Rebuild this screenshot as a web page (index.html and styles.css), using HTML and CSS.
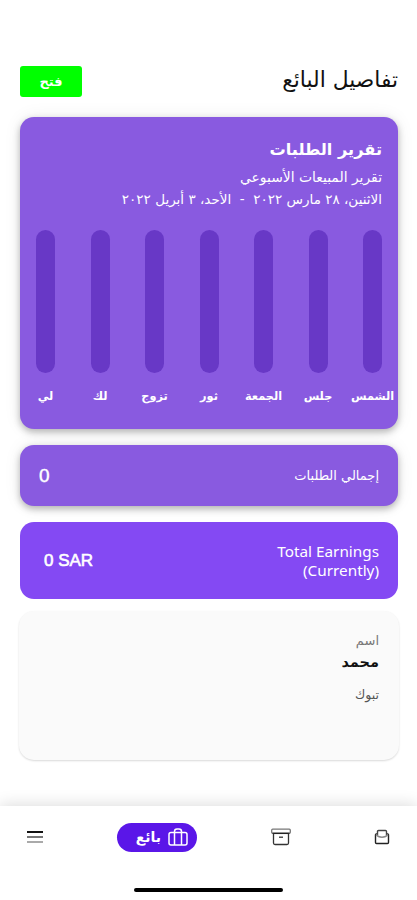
FILE: index.html
```
<!DOCTYPE html>
<html lang="ar" dir="rtl">
<head>
    <meta charset="UTF-8">
    <meta name="viewport" content="width=device-width, initial-scale=1.0">
    <title>تفاصيل البائع</title>
    <link rel="stylesheet" href="styles.css">
</head>
<body>
    <header class="header">
        <h1>تفاصيل البائع</h1>
        <button class="open-btn">فتح</button>
    </header>

    <main class="content">
        <section class="card report">
            <h2>تقرير الطلبات</h2>
            <p class="subtitle">تقرير المبيعات الأسبوعي</p>
            <p class="dates">الاثنين، ٢٨ مارس ٢٠٢٢ &nbsp;-&nbsp; الأحد، ٣ أبريل ٢٠٢٢</p>
            <div class="chart">
                <div class="day"><div class="bar"></div><span>الشمس</span></div>
                <div class="day"><div class="bar"></div><span>جلس</span></div>
                <div class="day"><div class="bar"></div><span>الجمعة</span></div>
                <div class="day"><div class="bar"></div><span>ثور</span></div>
                <div class="day"><div class="bar"></div><span>تزوج</span></div>
                <div class="day"><div class="bar"></div><span>لك</span></div>
                <div class="day"><div class="bar"></div><span>لي</span></div>
            </div>
        </section>

        <section class="card orders">
            <span class="orders-label">إجمالي الطلبات</span>
            <span class="orders-value">0</span>
        </section>

        <section class="card earnings">
            <span class="earnings-label" dir="ltr">Total Earnings<br>(Currently)</span>
            <span class="earnings-value" dir="ltr">0 SAR</span>
        </section>

        <section class="seller">
            <p class="seller-label">اسم</p>
            <p class="seller-name">محمد</p>
            <p class="seller-city">تبوك</p>
        </section>
    </main>

    <nav class="navbar">
        <div class="nav-items">
            <a class="nav-icon">
                <svg width="16" height="16" viewBox="0 0 16 16" fill="none" stroke="#222" stroke-width="1.4" stroke-linejoin="round">
                    <path d="M3.500 5H2.300q-.8 0-.8.8v7.700q0 1 1 1h11q1 0 1-1V5.800q0-.8-.8-.8h-1.200"/>
                    <path d="M3.500 6V2.500q0-1 1-1h7q1 0 1 1V6" stroke="#444"/>
                    <path d="M2 5.500q2 2.700 6 2.700t6-2.700" stroke="#888"/>
                </svg>
            </a>
            <a class="nav-icon archive">
                <svg width="20" height="18" viewBox="0 0 20 18" fill="none" stroke="#333" stroke-width="1.3" stroke-linejoin="round">
                    <rect x=".7" y="1.200" width="18.600" height="4" rx="1" stroke="#777"/>
                    <path d="M1.500 5.400h17" stroke="#222"/>
                    <path d="M2.500 5.500v9.500q0 1.500 1.500 1.500h12q1.500 0 1.500-1.500V5.500"/>
                    <path d="M8 9.200h4"/>
                </svg>
            </a>
            <a class="nav-active">
                <svg width="20" height="18" viewBox="0 0 20 18" fill="none" stroke="#fff" stroke-width="1.500" stroke-linejoin="round">
                    <rect x="1" y="4.500" width="18" height="12.500" rx="2"/>
                    <path d="M6.500 17V3.500q0-2.500 2.500-2.500h2q2.500 0 2.500 2.500V17"/>
                </svg>
                <span>بائع</span>
            </a>
            <a class="nav-icon">
                <svg width="16" height="14" viewBox="0 0 16 14">
                    <rect y="1" width="16" height="2" fill="#111"/>
                    <rect y="6" width="16" height="2" fill="#777"/>
                    <rect y="11" width="16" height="2" fill="#aaa"/>
                </svg>
            </a>
        </div>
        <div class="home-indicator"></div>
    </nav>
</body>
</html>
```
FILE: styles.css
```
* {
    box-sizing: border-box;
    margin: 0;
    padding: 0;
}
body {
    display: flex;
    flex-direction: column;
    height: 900px;
    overflow: hidden;
    background: #fff;
    font-family: "DejaVu Sans", sans-serif;
}
.header {
    display: flex;
    justify-content: space-between;
    align-items: center;
    height: 31px;
    margin: 66px 19px 20px 20px;
}
h1 {
    padding-bottom: 3px;
    font-size: 21.8px;
    font-weight: 400;
    line-height: 28px;
    color: #111;
}
.open-btn {
    width: 62px;
    height: 31px;
    border: none;
    border-radius: 3px;
    background: #00ff00;
    color: #fff;
    font-family: inherit;
    font-size: 13px;
    font-weight: bold;
}
.content {
    flex: 1;
    padding: 0 19px 0 20px;
}
.card {
    border-radius: 14px;
    background: #895ae0;
    color: #fff;
    box-shadow: 0 3px 7px rgba(0, 0, 0, 0.28), 0 0 18px rgba(0, 0, 0, 0.07);
}
.report {
    height: 312px;
    padding: 19px 16px 0;
    white-space: nowrap;
}
h2 {
    font-size: 16.2px;
    line-height: 28px;
}
.subtitle {
    font-size: 13.9px;
    line-height: 26px;
}
.dates {
    font-size: 13.5px;
    line-height: 19px;
}
.chart {
    display: flex;
    justify-content: space-between;
    margin-top: 21px;
}
.day {
    display: flex;
    flex-direction: column;
    align-items: center;
    width: 19px;
}
.bar {
    width: 19px;
    height: 143px;
    border-radius: 10px;
    background: #6838c6;
}
.day span {
    margin-top: 14px;
    font-size: 11.3px;
    font-weight: bold;
    line-height: 20px;
}
.orders,
.earnings {
    display: flex;
    justify-content: space-between;
    align-items: center;
}
.orders {
    height: 61px;
    margin-top: 16px;
    padding: 0 19px;
}
.orders-label {
    font-size: 13px;
}
.orders-value {
    font-family: "Liberation Sans", sans-serif;
    font-size: 19px;
    -webkit-text-stroke: 0.4px #fff;
}
.earnings {
    height: 77px;
    margin-top: 16px;
    padding: 0 19px 0 24px;
    background: #8449f3;
    box-shadow: none;
}
.earnings-label {
    font-family: "Noto Sans", sans-serif;
    font-size: 15.3px;
    line-height: 19px;
    text-align: right;
}
.earnings-value {
    font-family: "Liberation Sans", sans-serif;
    font-size: 17px;
    -webkit-text-stroke: 0.6px #fff;
}
.seller {
    height: 149px;
    margin: 12px -1px 0;
    padding: 19px 20px;
    border-radius: 15px;
    background: #fafafa;
    box-shadow: 0 1px 2px rgba(0, 0, 0, 0.15);
}
.seller-label {
    font-size: 13px;
    line-height: 22px;
    color: #777;
}
.seller-name {
    font-size: 14.5px;
    font-weight: bold;
    line-height: 20px;
    color: #111;
}
.seller-city {
    margin-top: 12px;
    font-size: 12.5px;
    line-height: 22px;
    color: #555;
}
.navbar {
    height: 94px;
    background: #fff;
    box-shadow: 0 -2px 14px rgba(0, 0, 0, 0.13);
}
.nav-items {
    display: flex;
    justify-content: space-between;
    align-items: center;
    height: 62px;
    padding: 0 27px;
}
.nav-icon,
.nav-active {
    display: flex;
    align-items: center;
}
.archive {
    margin-right: 9px;
}
.nav-active {
    gap: 7px;
    width: 80px;
    height: 29px;
    padding-right: 9px;
    border-radius: 15px;
    background: #5a16e8;
    color: #fff;
    font-size: 14px;
    font-weight: bold;
}
.home-indicator {
    width: 149px;
    height: 4px;
    margin: 20px auto 0;
    border-radius: 2px;
    background: #000;
}
```
